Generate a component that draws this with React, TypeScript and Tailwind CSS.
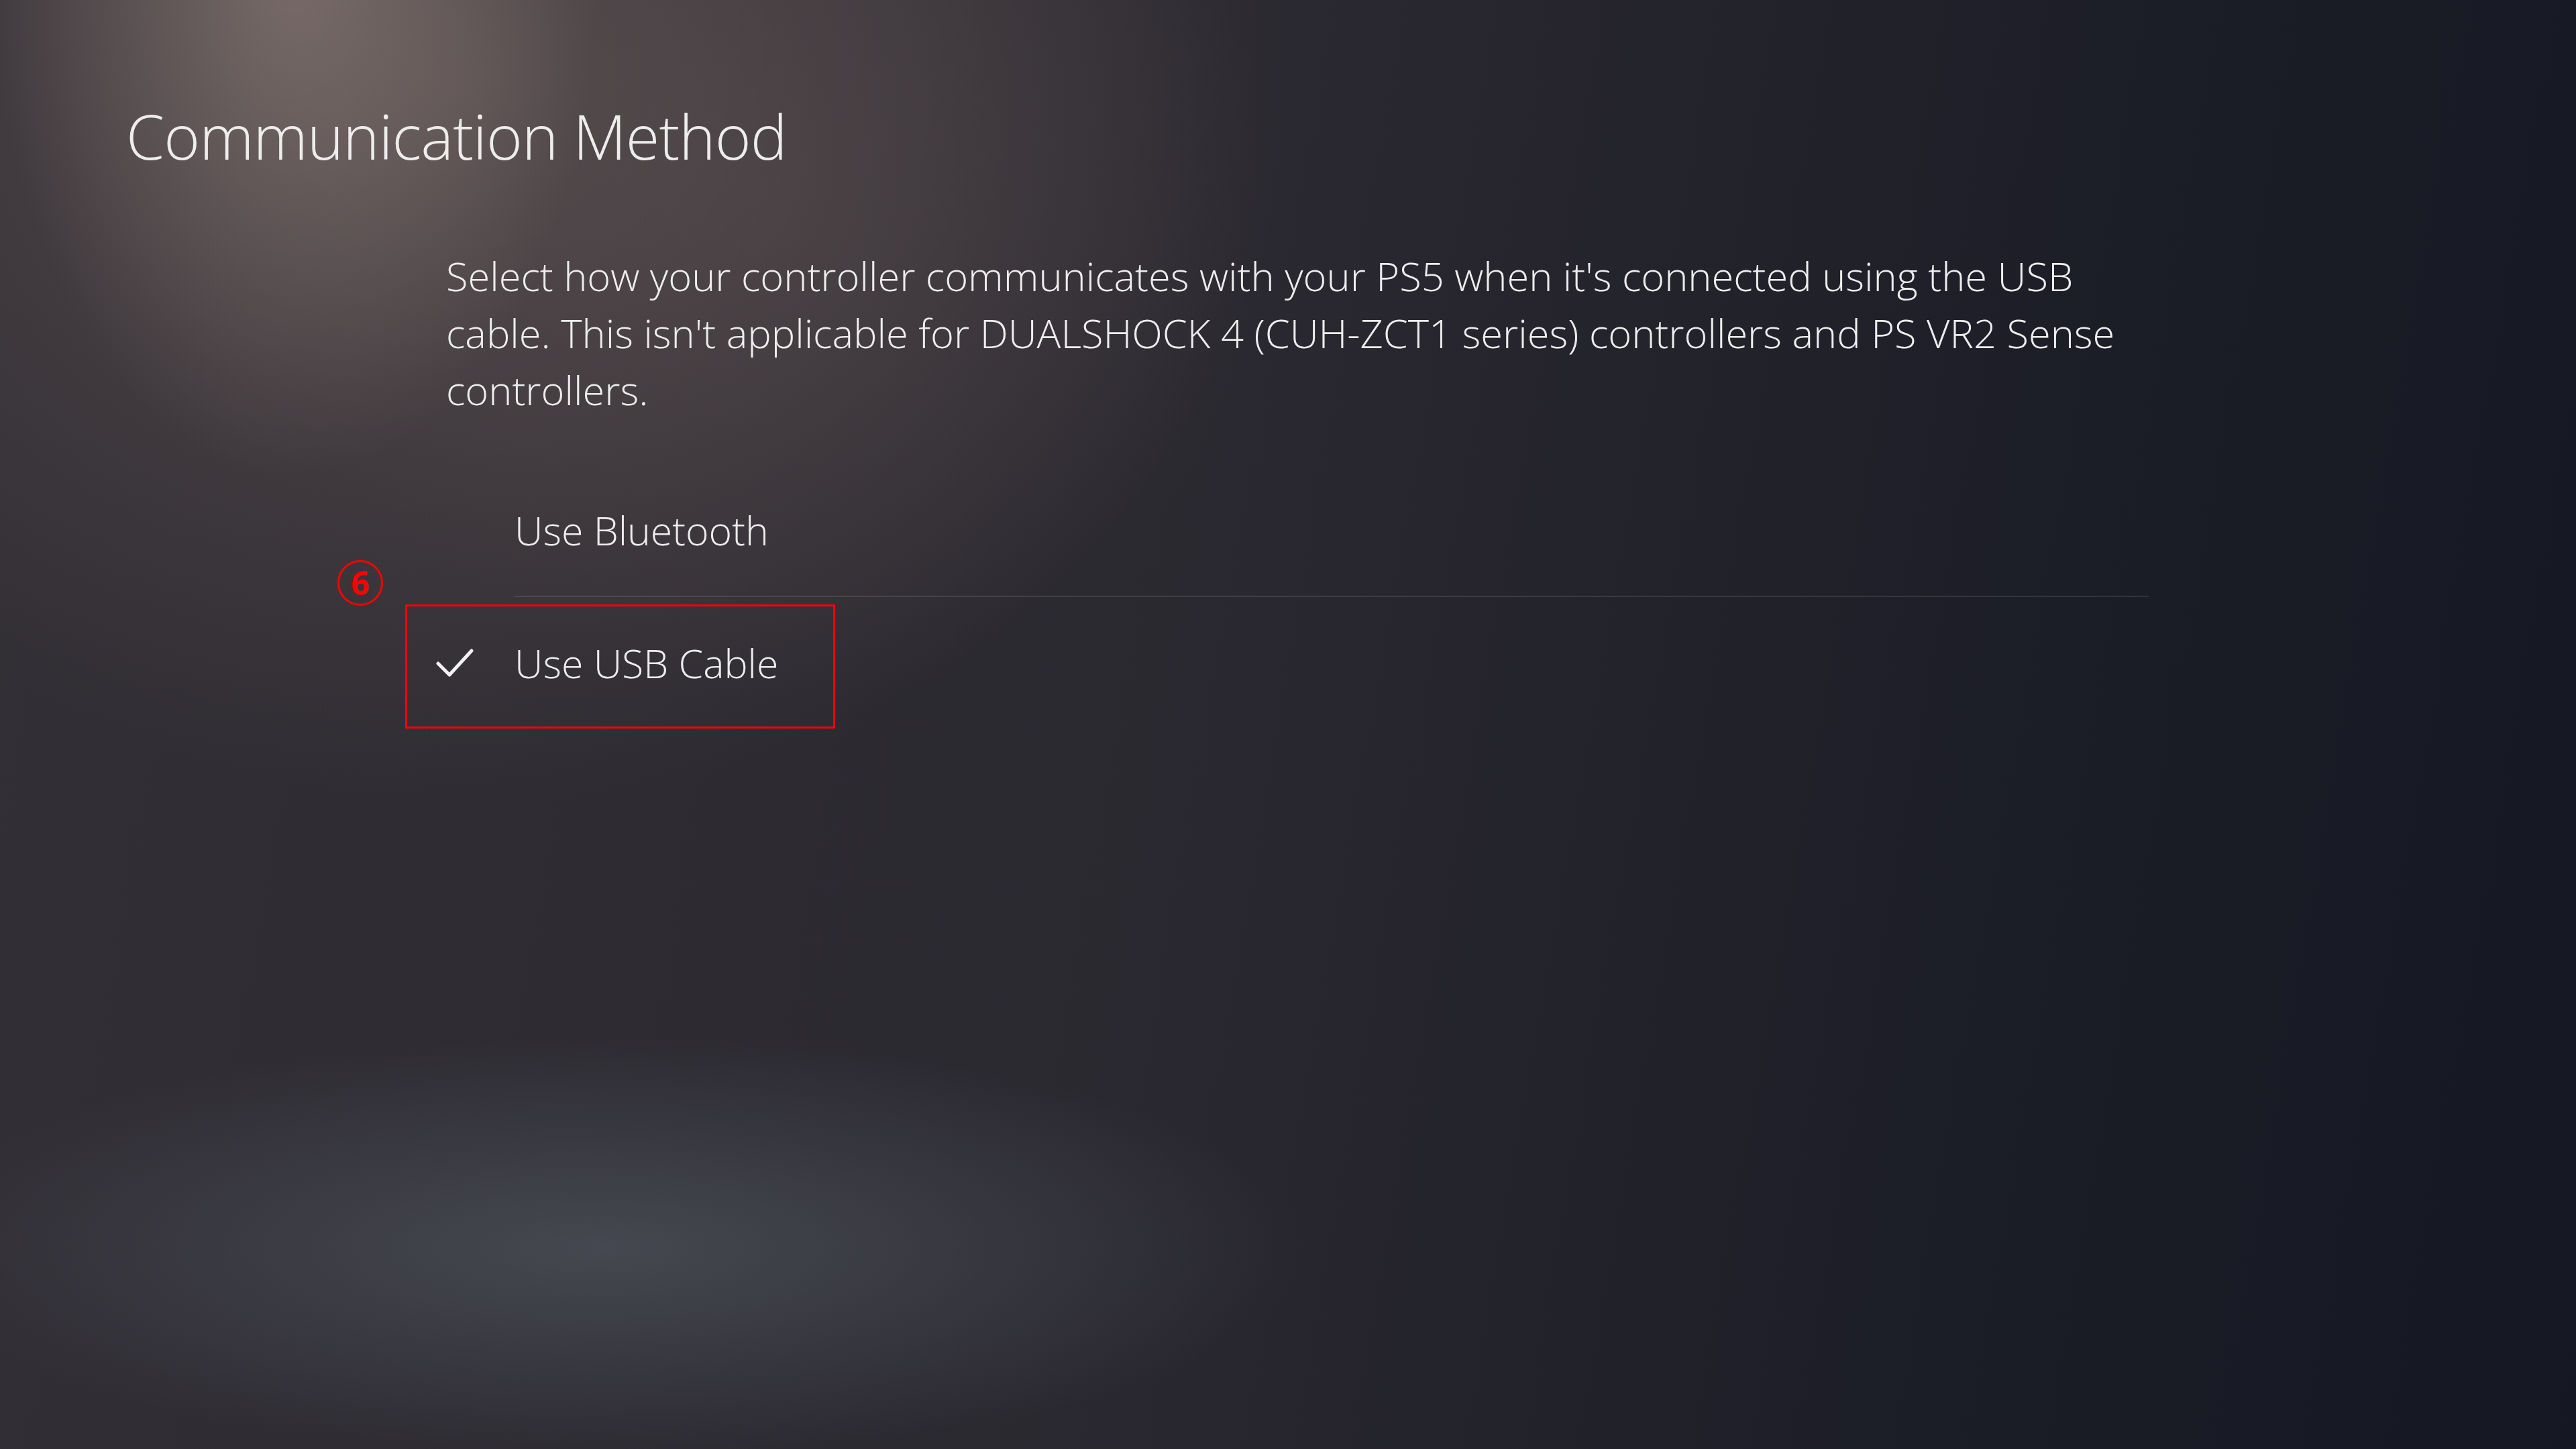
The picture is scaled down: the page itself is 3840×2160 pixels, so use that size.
const options = [
  { id: 'bluetooth', label: 'Use Bluetooth', selected: false },
  { id: 'usb', label: 'Use USB Cable', selected: true },
];

function CheckMark() {
  return (
    <svg viewBox="0 0 56 42" className="h-[42px] w-[56px]" fill="none">
      <polyline points="3,22 20,39 53,3" stroke="#f2f2f2" strokeWidth="5" strokeLinecap="round" strokeLinejoin="round" />
    </svg>
  );
}

export default function App() {
  return (
    <div
      className="relative min-h-screen w-full overflow-hidden text-[#ededed] font-light bg-[radial-gradient(ellipse_650px_1100px_at_440px_-60px,rgba(165,146,140,0.5),transparent_70%),radial-gradient(ellipse_1700px_1500px_at_700px_120px,rgba(118,102,99,0.5),transparent_72%),radial-gradient(ellipse_1000px_1000px_at_1150px_300px,rgba(85,76,78,0.3),transparent_75%),radial-gradient(ellipse_1400px_420px_at_900px_1860px,rgba(95,104,114,0.48),transparent_75%),linear-gradient(100deg,#322f35_0%,#2b2930_45%,#1a1c26_80%,#151823_100%)]"
      style={{ fontFamily: '"Open Sans", "Noto Sans", sans-serif' }}
    >
      {/* Header */}
      <h1 className="pl-[188px] pt-[157px] text-[92px] leading-none font-light tracking-[-0.01em]">
        Communication Method
      </h1>

      {/* Description */}
      <p className="mt-[119px] pl-[665px] text-[59.6px] leading-[85px] font-light">
        Select how your controller communicates with your PS5 when it's connected using the USB
        <br />
        cable. This isn't applicable for DUALSHOCK 4 (CUH-ZCT1 series) controllers and PS VR2 Sense
        <br />
        controllers.
      </p>

      {/* Options */}
      <div className="relative mt-[69px] ml-[640px] w-[2563px]">
        {options.map((opt, i) => (
          <div key={opt.id}>
            <div className="flex h-[196px] items-center">
              <div className="flex w-[127px] items-center pl-[10px]">{opt.selected && <CheckMark />}</div>
              <span className="text-[59px] font-light">{opt.label}</span>
            </div>
            {i < options.length - 1 && <div className="ml-[127px] h-[2px] bg-white/10" />}
          </div>
        ))}

        {/* Annotation: step number */}
        <div className="absolute left-[-137px] top-[143px] flex h-[68px] w-[68px] items-center justify-center rounded-full border-[3px] border-[#ff0000]">
          <span className="text-[48px] font-bold leading-none text-[#ff0000]">6</span>
        </div>

        {/* Annotation: highlight box */}
        <div className="pointer-events-none absolute left-[-36px] top-[209px] h-[185px] w-[641px] border-[3px] border-[#ff0000]" />
      </div>
    </div>
  );
}
